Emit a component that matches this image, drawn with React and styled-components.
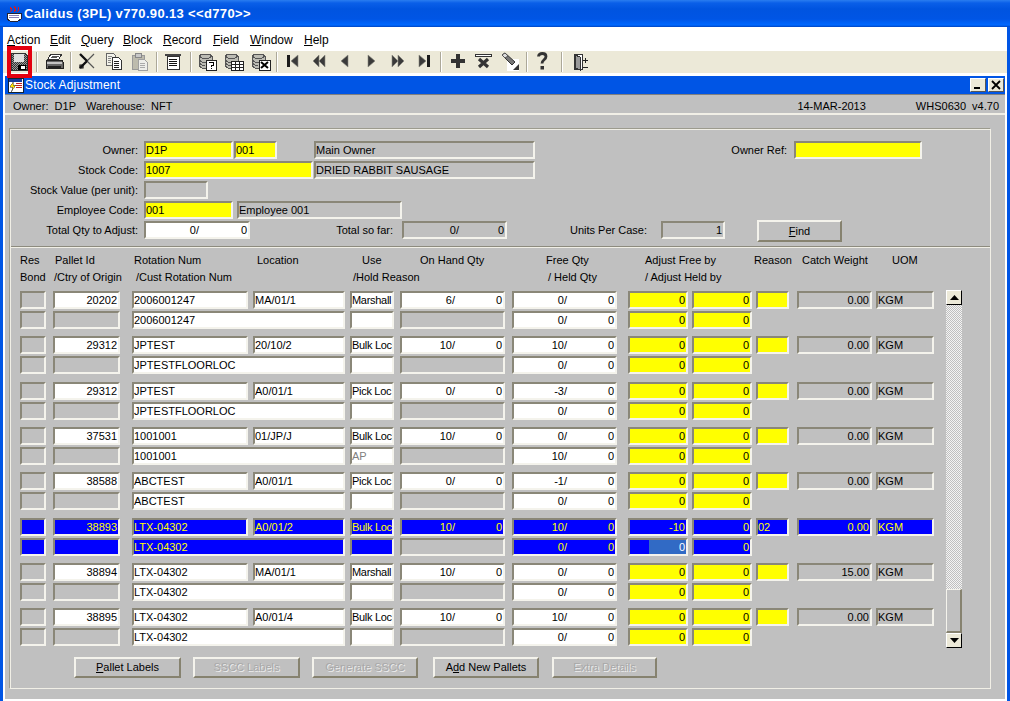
import React from "react";
import styled, { createGlobalStyle } from "styled-components";

const GlobalStyle = createGlobalStyle`
  html, body { margin: 0; padding: 0; background: #c0c0c0; }
  * { box-sizing: border-box; }
  u { text-underline-offset: 1px; }
`;

const Page = styled.div`
  width: 1010px;
  height: 701px;
  overflow: hidden;
  display: flex;
  flex-direction: column;
  font-family: "Liberation Sans", Arial, sans-serif;
  font-size: 11px;
  color: #000;
`;

const TitleBar = styled.div`
  height: 27px;
  flex: none;
  display: flex;
  align-items: center;
  gap: 1px;
  padding: 0 0 0 5px;
  background: linear-gradient(180deg, #2a7df0 0, #0a5fe8 3px, #0054e0 9px, #0055e5 19px, #0068ff 25px, #0044c0 27px);
  color: #fff;
  font-size: 13px;
  font-weight: bold;
  letter-spacing: 0.35px;
`;

const Frame = styled.div`
  flex: 1;
  min-height: 0;
  display: flex;
  flex-direction: column;
  border-left: 3px solid #0055e5;
  border-right: 3px solid #0055e5;
  background: #fff;
`;

const MenuBar = styled.div`
  height: 24px;
  flex: none;
  display: flex;
  align-items: center;
  padding: 2px 0 0 4px;
  font-size: 12px;
  background: #fff;
`;

const MenuItem = styled.span`
  width: ${(p) => p.$w}px;
  white-space: nowrap;
`;

const ToolBar = styled.div`
  position: relative;
  height: 22px;
  flex: none;
  display: flex;
  align-items: center;
  padding-left: 3px;
  background: #ece9d8;
`;

const Tool = styled.div`
  width: 26.2px;
  height: 22px;
  flex: none;
  display: flex;
  align-items: center;
  justify-content: center;
`;

const ToolSep = styled.div`
  width: ${(p) => p.$w}px;
  height: 20px;
  flex: none;
  display: flex;
  justify-content: center;
  &::before {
    content: "";
    width: 1px;
    height: 20px;
    background: #aca899;
    box-shadow: 1px 0 0 #fff;
  }
`;

const SaveMarker = styled.div`
  position: absolute;
  left: 4px;
  top: -5px;
  width: 25px;
  height: 32px;
  border: 4px solid #e3000f;
  pointer-events: none;
`;

const Window = styled.div`
  flex: 1;
  min-height: 0;
  margin: 3px 2px 2px;
  display: flex;
  flex-direction: column;
  background: #c0c0c0;
`;

const WindowTitle = styled.div`
  height: 18px;
  flex: none;
  display: flex;
  align-items: center;
  gap: 1px;
  padding: 0 1px 0 3px;
  background: #0055e5;
  color: #fff;
  font-size: 12px;
  letter-spacing: 0.15px;
`;

const WindowButtons = styled.div`
  margin-left: auto;
  display: flex;
  gap: 2px;
`;

const WindowButton = styled.div`
  width: 16px;
  height: 14px;
  display: flex;
  align-items: center;
  justify-content: center;
  background: #ece9d8;
  border: 1px solid;
  border-color: #fff #555 #555 #fff;
`;

const StatusBar = styled.div`
  height: 21px;
  flex: none;
  display: flex;
  align-items: center;
  padding: 4px 0 0 8px;
  border-top: 1px solid #808080;
  border-bottom: 2px solid #f1efe6;
  white-space: pre;
`;

const StatusText = styled.span`
  margin-left: ${(p) => p.$ml || 0}px;
`;

const Panel = styled.div`
  width: 981px;
  height: 560px;
  margin: 14px 0 0 5px;
  border: 1px solid #f1efe6;
  box-shadow: -1px -1px 0 #9c9b8e;
  flex: none;
`;

const HeaderForm = styled.div`
  height: 117px;
  padding-top: 11px;
  border-bottom: 1px solid #8d8b7e;
  display: flex;
  flex-direction: column;
`;

const FormRow = styled.div`
  height: 20px;
  display: flex;
  align-items: flex-start;
`;

const Label = styled.div`
  width: ${(p) => p.$w}px;
  padding-right: ${(p) => p.$pr ?? 6}px;
  padding-left: ${(p) => p.$pl || 0}px;
  flex: none;
  height: 18px;
  line-height: 18px;
  text-align: ${(p) => (p.$pl ? "left" : "right")};
  white-space: nowrap;
`;

const tones = {
  yellow: "background: #ffff00; color: #000;",
  white: "background: #fff; color: #000;",
  gray: "background: #c0c0c0; color: #000;",
  blue: "background: #0000ff; color: #ffff00;",
  caret: "background: linear-gradient(90deg, #0000ff 19px, #316ac5 19px); color: #fff;",
};

const Field = styled.div`
  width: ${(p) => p.$w}px;
  margin-left: ${(p) => p.$ml || 0}px;
  height: 18px;
  flex: none;
  display: flex;
  align-items: center;
  justify-content: ${(p) => (p.$right ? "flex-end" : "flex-start")};
  padding: 0 1px 0 0;
  overflow: hidden;
  white-space: nowrap;
  border: 2px solid;
  border-color: #8a8778 #f4f3ec #f4f3ec #8a8778;
  line-height: 14px;
  ${(p) => tones[p.$tone || "gray"]}
  ${(p) => p.$muted && "color: #808080;"}
  ${(p) => p.$tight && "letter-spacing: -0.3px; padding-right: 0;"}
  ${FormRow} & {
    padding-bottom: 1px;
  }
`;

const QtyLeft = styled.span`
  width: ${(p) => p.$w}px;
  flex: none;
  text-align: right;
`;

const QtyRight = styled.span`
  flex: 1;
  text-align: right;
`;

const FindButton = styled.div`
  width: 85px;
  height: 22px;
  margin: -1px 0 0 32px;
  flex: none;
  display: flex;
  align-items: center;
  justify-content: center;
  border: 2px solid;
  border-color: #f4f3ec #86826f #86826f #f4f3ec;
`;

const Detail = styled.div`
  border-top: 1px solid #f1efe6;
  padding-left: 9px;
`;

const Heading = styled.div`
  height: 17px;
  display: flex;
  align-items: center;
  white-space: nowrap;
`;

const HeadingRows = styled.div`
  height: 43px;
  padding-top: 3px;
`;

const HeadingText = styled.span`
  width: ${(p) => p.$x}px;
  flex: none;
`;

const TableArea = styled.div`
  display: flex;
  align-items: flex-start;
`;

const Rows = styled.div`
  width: 914px;
  flex: none;
`;

const RowGroup = styled.div`
  height: 45.33px;
  display: flex;
  flex-direction: column;
  gap: 2px;
`;

const Row = styled.div`
  display: flex;
  height: 18px;
`;

const ScrollBar = styled.div`
  width: 16px;
  height: 358px;
  margin: -1px 0 0 12px;
  flex: none;
  display: flex;
  flex-direction: column;
`;

const ScrollArrow = styled.div`
  height: 15px;
  flex: none;
  display: flex;
  align-items: center;
  justify-content: center;
  background: #ece9d8;
  border: 1px solid;
  border-color: #fff #000 #000 #fff;
`;

const ScrollTrack = styled.div`
  height: 284px;
  flex: none;
  background: repeating-conic-gradient(#c0c0c0 0 25%, #f4f4f4 0 50%) 0 0 / 2px 2px;
`;

const ScrollThumb = styled.div`
  flex: 1;
  background: #c0c0c0;
  border: 1px solid;
  border-width: 1px 2px 2px 1px;
  border-color: #f4f3ec #86826f #86826f #f4f3ec;
`;

const ButtonBar = styled.div`
  display: flex;
  margin-top: 3px;
  padding-left: 54px;
`;

const ActionButton = styled.div`
  width: ${(p) => p.$w}px;
  margin-left: ${(p) => p.$ml || 0}px;
  height: 21px;
  flex: none;
  display: flex;
  align-items: center;
  justify-content: center;
  border: 2px solid;
  border-color: #f4f3ec #86826f #86826f #f4f3ec;
  ${(p) => p.$off && "color: #a8a8a8; text-shadow: 1px 1px 0 #ececec;"}
`;

// toolbar icons are all drawn on the same 22x22 box
const Glyph = ({ children }) => (
  <svg width="22" height="22" viewBox="0 0 22 22" shapeRendering="crispEdges">
    {children}
  </svg>
);

const SaveIcon = () => (
  <Glyph>
    <defs>
      <pattern id="dither" width="2" height="2" patternUnits="userSpaceOnUse">
        <rect width="2" height="2" fill="#9a9a9a" />
        <rect width="1" height="1" fill="#333" />
        <rect x="1" y="1" width="1" height="1" fill="#333" />
      </pattern>
    </defs>
    <path d="M3 2h14l2 2v15H3z" fill="url(#dither)" stroke="#333" />
    <rect x="6" y="3" width="10" height="8" fill="#e0e0e0" />
    <rect x="10" y="14" width="8" height="5" fill="#000" />
    <rect x="13" y="15" width="4" height="3" fill="#fff" />
  </Glyph>
);

const PrintIcon = () => (
  <Glyph>
    <path d="M8 3h11l-3 5H5z" fill="#fff" stroke="#333" />
    <path d="M9 5h7M8 6h6" stroke="#555" />
    <path d="M4 9h15l1 2v6H3v-6z" fill="#666" stroke="#222" />
    <rect x="4" y="11" width="15" height="2" fill="#c4c4c4" />
    <rect x="5" y="15" width="13" height="2" fill="#222" />
  </Glyph>
);

const ScissorsIcon = () => (
  <svg width="22" height="22" viewBox="0 0 22 22">
    <path d="M11 10L18 3M11 10L18 17" stroke="#555" strokeWidth="1.2" fill="none" />
    <path d="M4 3L11 10M4 17L11 10" stroke="#111" strokeWidth="2.4" fill="none" />
    <path d="M4 14h3v3H4z" fill="none" stroke="#111" strokeWidth="1.2" />
  </svg>
);

const CopyIcon = () => (
  <Glyph>
    <path d="M3 2h7l2 2v10H3z" fill="#f2f2ea" stroke="#666" />
    <path d="M5 5h4M5 7h3M5 9h3M5 11h3" stroke="#888" />
    <path d="M9 6h6l3 3v9H9z" fill="#fff" stroke="#333" />
    <path d="M11 10h5M11 12h5M11 14h5M11 16h5" stroke="#222" />
  </Glyph>
);

const PasteIcon = () => (
  <Glyph>
    <path d="M3 4h12v14H3z" fill="#bdbbad" stroke="#999" />
    <rect x="6" y="2" width="6" height="4" fill="#c8c8c8" stroke="#888" />
    <path d="M9 8h6l3 3v8H9z" fill="#eeeeea" stroke="#a0a0a0" />
    <path d="M11 12h5M11 14h5M11 16h5" stroke="#aaa" />
  </Glyph>
);

const ListIcon = () => (
  <Glyph>
    <rect x="3" y="3" width="16" height="2" fill="#444" />
    <path d="M5 5h12v13H5z" fill="#fff" stroke="#333" />
    <path d="M7 8h8M7 10h8M7 12h8M7 14h8" stroke="#111" />
  </Glyph>
);

const DbBase = () => (
  <>
    <path d="M2 5l3-2h7l3 2v10l-3 2H5l-3-2z" fill="#bcbcb4" stroke="#555" />
    <path d="M2 5l3 2h7l3-2M2 9l3 2h5M2 12l3 2h3" fill="none" stroke="#555" />
  </>
);

const QueryIcon = () => (
  <Glyph>
    <DbBase />
    <rect x="9" y="9" width="10" height="10" fill="#fff" stroke="#222" />
    <path d="M12 11h4v3h-2v2M14 17v1" fill="none" stroke="#000" />
  </Glyph>
);

const TableIcon = () => (
  <Glyph>
    <DbBase />
    <rect x="8" y="10" width="12" height="9" fill="#fff" stroke="#222" />
    <path d="M8 13h12M8 16h12M12 10v9M16 10v9" stroke="#222" />
  </Glyph>
);

const CancelIcon = () => (
  <Glyph>
    <DbBase />
    <rect x="9" y="9" width="11" height="10" fill="#fff" stroke="#222" />
    <path d="M11 11l7 6M18 11l-7 6" stroke="#000" strokeWidth="2" shapeRendering="auto" />
  </Glyph>
);

const NavIcon = ({ points, bar }) => (
  <svg width="22" height="22" viewBox="0 0 22 22">
    {bar !== undefined && <rect x={bar} y="4" width="3" height="12" fill="#1c1c1c" />}
    {points.map((p) => (
      <polygon key={p} points={p} fill="#3a3a3a" stroke="#8a8a80" strokeWidth="0.6" />
    ))}
  </svg>
);

const PlusIcon = () => (
  <Glyph>
    <path d="M9 3h4v5h5v4h-5v5H9v-5H4V8h5z" fill="#333" />
  </Glyph>
);

const DeleteIcon = () => (
  <svg width="22" height="22" viewBox="0 0 22 22">
    <rect x="2.500" y="3.500" width="16" height="2" fill="#fff" stroke="#333" strokeWidth="1" />
    <path d="M6 8l9 8M15 8l-9 8" stroke="#333" strokeWidth="3.200" />
  </svg>
);

const EraseIcon = () => (
  <svg width="22" height="22" viewBox="0 0 22 22">
    <rect x="8" y="8" width="12" height="12" fill="#fff" />
    <path d="M20 19h-6l6-6z" fill="#333" />
    <path d="M3 4l3-2 10 9-3 3z" fill="#777" stroke="#333" />
    <path d="M3 4l3-2 3 3-3 2z" fill="#ddd" stroke="#555" />
  </svg>
);

const HelpIcon = () => (
  <svg width="22" height="22" viewBox="0 0 22 22">
    <path d="M7.500 5.500c0-4 7.500-4 7.500 0 0 3.500-4 3-4 7" fill="none" stroke="#333" strokeWidth="2.800" />
    <rect x="9.500" y="15" width="3.500" height="3.500" fill="#333" />
  </svg>
);

const ExitIcon = () => (
  <Glyph>
    <path d="M5 3h8v15H5z" fill="#fff" stroke="#333" />
    <path d="M6 4l5 2v13l-5-2z" fill="#999" stroke="#333" />
    <path d="M14 16h5M16 7v5M14 9h5" stroke="#222" />
  </Glyph>
);

const CalidusIcon = () => (
  <svg width="18" height="18" viewBox="0 0 18 18" shapeRendering="crispEdges">
    <path d="M2 8h14v6l-3 2H5l-3-2z" fill="#fff" stroke="#223" />
    <path d="M4 10h10M4 12h10" stroke="#8a7fb8" />
    <path d="M5 2l2 3-2 2M9 1l2 3-2 3M13 2l1 3-2 2" fill="none" stroke="#e01818" strokeWidth="1.200" />
  </svg>
);

const FormIcon = () => (
  <svg width="16" height="16" viewBox="0 0 16 16" shapeRendering="crispEdges">
    <rect x="0" y="1" width="15" height="14" fill="#fff" stroke="#123" />
    <rect x="1" y="2" width="13" height="3" fill="#123c9c" />
    <path d="M8 6h6M8 8h6M8 10h6" stroke="#c02020" />
    <path d="M5 5L2 10h3l-2 5 5-7H5z" fill="#ffe000" stroke="#333" strokeWidth="0.5" />
  </svg>
);

const Qty = ({ tone, a, b, w = 105, ml, split = 53 }) => (
  <Field $w={w} $ml={ml} $tone={tone}>
    <QtyLeft $w={split}>{a}/</QtyLeft>
    <QtyRight>{b}</QtyRight>
  </Field>
);

const records = [
  { id: "20202", rot: "2006001247", loc: "MA/01/1", use: "Marshall", hand: "6", free: "0", held: "0", weight: "0.00" },
  { id: "29312", rot: "JPTEST", rot2: "JPTESTFLOORLOC", loc: "20/10/2", use: "Bulk Loc", hand: "10", free: "10", held: "0", weight: "0.00" },
  { id: "29312", rot: "JPTEST", rot2: "JPTESTFLOORLOC", loc: "A0/01/1", use: "Pick Loc", hand: "0", free: "-3", held: "0", weight: "0.00" },
  { id: "37531", rot: "1001001", loc: "01/JP/J", use: "Bulk Loc", hold: "AP", hand: "10", free: "0", held: "10", weight: "0.00" },
  { id: "38588", rot: "ABCTEST", loc: "A0/01/1", use: "Pick Loc", hand: "0", free: "-1", held: "0", weight: "0.00" },
  { id: "38893", rot: "LTX-04302", loc: "A0/01/2", use: "Bulk Loc", hand: "10", free: "10", held: "0", weight: "0.00", adjust: "-10", reason: "02", current: true },
  { id: "38894", rot: "LTX-04302", loc: "MA/01/1", use: "Marshall", hand: "10", free: "0", held: "0", weight: "15.00" },
  { id: "38895", rot: "LTX-04302", loc: "A0/01/4", use: "Bulk Loc", hand: "10", free: "10", held: "0", weight: "0.00" },
];

const RecordRows = ({ r }) => {
  const white = r.current ? "blue" : "white";
  const yellow = r.current ? "blue" : "yellow";
  const gray = r.current ? "blue" : "gray";
  return (
    <RowGroup>
      <Row>
        <Field $w={26} $tone={gray} />
        <Field $w={67} $ml={7} $tone={white} $right>{r.id}</Field>
        <Field $w={116} $ml={12} $tone={white}>{r.rot}</Field>
        <Field $w={92} $ml={5} $tone={white}>{r.loc}</Field>
        <Field $w={44} $ml={5} $tone={white} $tight>{r.use}</Field>
        <Qty ml={6} tone={white} a={r.hand} b="0" />
        <Qty ml={7} tone={white} a={r.free} b="0" />
        <Field $w={60} $ml={11} $tone={yellow} $right>{r.adjust || "0"}</Field>
        <Field $w={60} $ml={4} $tone={yellow} $right>0</Field>
        <Field $w={33} $ml={4} $tone={yellow}>{r.reason}</Field>
        <Field $w={75} $ml={8} $tone={gray} $right>{r.weight}</Field>
        <Field $w={58} $ml={4} $tone={gray}>KGM</Field>
      </Row>
      <Row>
        <Field $w={26} $tone={gray} />
        <Field $w={67} $ml={7} $tone={gray} />
        <Field $w={213} $ml={12} $tone={white}>{r.rot2 || r.rot}</Field>
        <Field $w={44} $ml={5} $tone={white} $muted={!!r.hold}>{r.hold}</Field>
        <Field $w={105} $ml={6} />
        <Qty ml={7} tone={white} a={r.held} b="0" />
        <Field $w={60} $ml={11} $tone={r.current ? "caret" : "yellow"} $right>0</Field>
        <Field $w={60} $ml={4} $tone={yellow} $right>0</Field>
      </Row>
    </RowGroup>
  );
};

const FIRST = ["16,4 9,10 16,16"];
const FAST_BACK = ["11,4 5,10 11,16", "17,4 11,10 17,16"];
const BACK = ["14,4 7,10 14,16"];
const NEXT = ["8,4 15,10 8,16"];
const FAST_NEXT = ["5,4 11,10 5,16", "11,4 17,10 11,16"];
const LAST = ["6,4 13,10 6,16"];

export default function App() {
  return (
    <Page>
      <GlobalStyle />
      <TitleBar>
        <CalidusIcon />
        Calidus (3PL) v770.90.13 &lt;&lt;d770&gt;&gt;
      </TitleBar>
      <Frame>
        <MenuBar>
          <MenuItem $w={43}><u>A</u>ction</MenuItem>
          <MenuItem $w={31}><u>E</u>dit</MenuItem>
          <MenuItem $w={42}><u>Q</u>uery</MenuItem>
          <MenuItem $w={40}><u>B</u>lock</MenuItem>
          <MenuItem $w={50}><u>R</u>ecord</MenuItem>
          <MenuItem $w={37}><u>F</u>ield</MenuItem>
          <MenuItem $w={54}><u>W</u>indow</MenuItem>
          <MenuItem $w={30}><u>H</u>elp</MenuItem>
        </MenuBar>
        <ToolBar>
          <Tool><SaveIcon /></Tool>
          <ToolSep $w={9} />
          <Tool><PrintIcon /></Tool>
          <ToolSep $w={7} />
          <Tool><ScissorsIcon /></Tool>
          <Tool><CopyIcon /></Tool>
          <Tool><PasteIcon /></Tool>
          <ToolSep $w={7} />
          <Tool><ListIcon /></Tool>
          <ToolSep $w={9} />
          <Tool><QueryIcon /></Tool>
          <Tool><TableIcon /></Tool>
          <Tool><CancelIcon /></Tool>
          <ToolSep $w={6} />
          <Tool><NavIcon points={FIRST} bar={5} /></Tool>
          <Tool><NavIcon points={FAST_BACK} /></Tool>
          <Tool><NavIcon points={BACK} /></Tool>
          <Tool><NavIcon points={NEXT} /></Tool>
          <Tool><NavIcon points={FAST_NEXT} /></Tool>
          <Tool><NavIcon points={LAST} bar={14} /></Tool>
          <ToolSep $w={8} />
          <Tool><PlusIcon /></Tool>
          <Tool><DeleteIcon /></Tool>
          <Tool><EraseIcon /></Tool>
          <ToolSep $w={6} />
          <Tool><HelpIcon /></Tool>
          <ToolSep $w={11} />
          <Tool><ExitIcon /></Tool>
          <SaveMarker />
        </ToolBar>
        <Window>
          <WindowTitle>
            <FormIcon />
            <span>Stock Adjustment</span>
            <WindowButtons>
              <WindowButton>
                <svg width="10" height="10" viewBox="0 0 10 10"><rect x="1" y="7" width="6" height="2" fill="#000" /></svg>
              </WindowButton>
              <WindowButton>
                <svg width="10" height="10" viewBox="0 0 10 10"><path d="M1 1l8 8M9 1l-8 8" stroke="#000" strokeWidth="1.8" /></svg>
              </WindowButton>
            </WindowButtons>
          </WindowTitle>
          <StatusBar>
            <StatusText>Owner:  D1P</StatusText>
            <StatusText $ml={10}>Warehouse:  NFT</StatusText>
            <StatusText $ml={625}>14-MAR-2013</StatusText>
            <StatusText $ml={50}>WHS0630  v4.70</StatusText>
          </StatusBar>
          <Panel>
            <HeaderForm>
              <FormRow>
                <Label $w={133}>Owner:</Label>
                <Field $w={89} $tone="yellow">D1P</Field>
                <Field $w={43} $ml={1} $tone="yellow">001</Field>
                <Field $w={221} $ml={37}>Main Owner</Field>
                <Label $w={259} $pr={7}>Owner Ref:</Label>
                <Field $w={128} $tone="yellow" />
              </FormRow>
              <FormRow>
                <Label $w={133}>Stock Code:</Label>
                <Field $w={169} $tone="yellow">1007</Field>
                <Field $w={221} $ml={1}>DRIED RABBIT SAUSAGE</Field>
              </FormRow>
              <FormRow>
                <Label $w={133}>Stock Value (per unit):</Label>
                <Field $w={64} />
              </FormRow>
              <FormRow>
                <Label $w={133}>Employee Code:</Label>
                <Field $w={89} $tone="yellow">001</Field>
                <Field $w={165} $ml={4}>Employee 001</Field>
              </FormRow>
              <FormRow>
                <Label $w={133}>Total Qty to Adjust:</Label>
                <Qty tone="white" a="0" b="0" w={106} split={53} />
                <Label $w={152} $pr={9}>Total so far:</Label>
                <Qty a="0" b="0" w={105} split={55} />
                <Label $w={120} $pr={0} $pl={63}>Units Per Case:</Label>
                <Field $w={64} $ml={34} $right>1</Field>
                <FindButton><span><u>F</u>ind</span></FindButton>
              </FormRow>
            </HeaderForm>
            <Detail>
              <HeadingRows>
                <Heading>
                  <HeadingText $x={35}>Res</HeadingText>
                  <HeadingText $x={79}>Pallet Id</HeadingText>
                  <HeadingText $x={123}>Rotation Num</HeadingText>
                  <HeadingText $x={105}>Location</HeadingText>
                  <HeadingText $x={58}>Use</HeadingText>
                  <HeadingText $x={126}>On Hand Qty</HeadingText>
                  <HeadingText $x={99}>Free Qty</HeadingText>
                  <HeadingText $x={109}>Adjust Free by</HeadingText>
                  <HeadingText $x={48}>Reason</HeadingText>
                  <HeadingText $x={90}>Catch Weight</HeadingText>
                  <HeadingText $x={30}>UOM</HeadingText>
                </Heading>
                <Heading>
                  <HeadingText $x={34}>Bond</HeadingText>
                  <HeadingText $x={82}>/Ctry of Origin</HeadingText>
                  <HeadingText $x={217}>/Cust Rotation Num</HeadingText>
                  <HeadingText $x={195}>/Hold Reason</HeadingText>
                  <HeadingText $x={97}>/ Held Qty</HeadingText>
                  <HeadingText $x={110}>/ Adjust Held by</HeadingText>
                </Heading>
              </HeadingRows>
              <TableArea>
                <Rows>
                  {records.map((r) => (
                    <RecordRows key={r.id + r.loc} r={r} />
                  ))}
                </Rows>
                <ScrollBar>
                  <ScrollArrow>
                    <svg width="9" height="6" viewBox="0 0 9 6"><path d="M4.500 0L9 5H0z" fill="#000" /></svg>
                  </ScrollArrow>
                  <ScrollTrack />
                  <ScrollThumb />
                  <ScrollArrow>
                    <svg width="9" height="6" viewBox="0 0 9 6"><path d="M0 0h9L4.500 5z" fill="#000" /></svg>
                  </ScrollArrow>
                </ScrollBar>
              </TableArea>
              <ButtonBar>
                <ActionButton $w={107}><span><u>P</u>allet Labels</span></ActionButton>
                <ActionButton $w={107} $ml={12} $off>SSCC Labels</ActionButton>
                <ActionButton $w={106} $ml={12} $off>Generate SSCC</ActionButton>
                <ActionButton $w={106} $ml={15}><span>A<u>d</u>d New Pallets</span></ActionButton>
                <ActionButton $w={105} $ml={13} $off>Extra Details</ActionButton>
              </ButtonBar>
            </Detail>
          </Panel>
        </Window>
      </Frame>
    </Page>
  );
}
